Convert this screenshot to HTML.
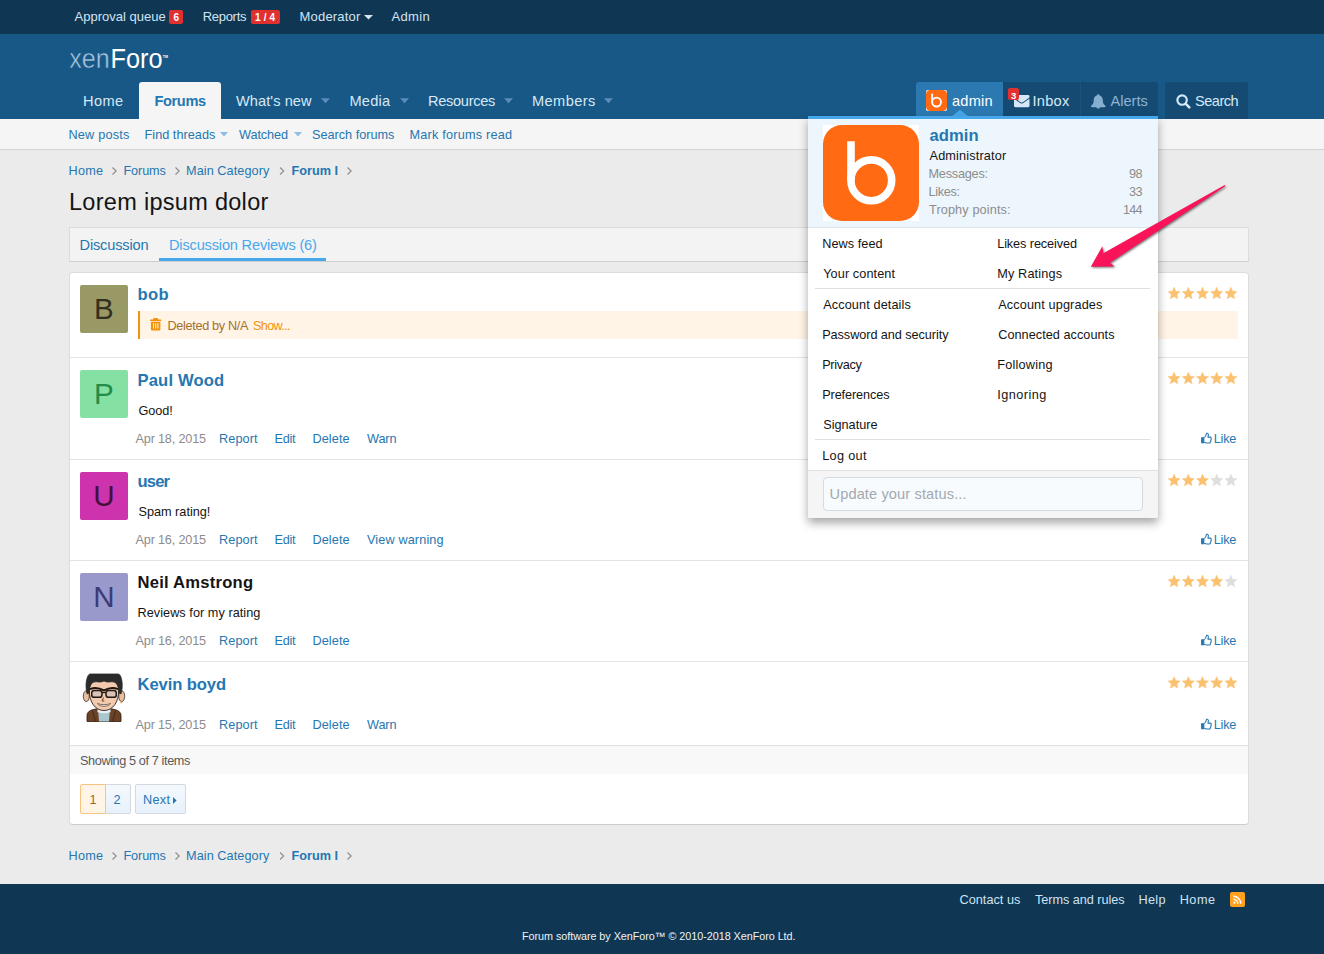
<!DOCTYPE html>
<html lang="en">
<head>
<meta charset="utf-8">
<title>Lorem ipsum dolor | XenForo</title>
<style>
*{box-sizing:border-box;margin:0;padding:0}
html,body{width:1324px;height:954px;overflow:hidden}
body{position:relative;background:#ebebeb;font-family:"Liberation Sans",sans-serif;font-size:15px;color:#141414}
a{text-decoration:none}
.abs,.t{position:absolute}
.t{white-space:nowrap;display:block;font-weight:400}
h1.t{font-weight:400}
#staffbar{left:0;top:0;width:1324px;height:34px;background:#0f3652}
#header{left:0;top:34px;width:1324px;height:85px;background:#185886}
#subnav{left:0;top:119px;width:1324px;height:31px;background:#f5f5f5;border-bottom:1px solid #d4d4d4}
.badge{background:#e03030;border-radius:2px}
#tabsel{left:139px;top:82px;width:82px;height:37px;background:#f5f5f5;border-radius:3px 3px 0 0}
.ng{top:82px;height:37px;background:#154b73}
#tabs{left:69px;top:227px;width:1180px;height:35px;background:#f3f3f3;border:1px solid #dcdcdc;border-bottom-color:#cfcfcf}
#tabline{left:159px;top:258px;width:167px;height:3px;background:#47a7eb}
#block{left:69px;top:272px;width:1180px;height:553px;background:#fff;border:1px solid #dcdcdc;border-bottom-color:#cdcdcd;border-radius:4px}
.rowline{left:70px;width:1178px;height:1px;background:#e4e4e4}
.av{left:80px;width:48px;height:48px;border-radius:2px}
#blockfoot{left:70px;top:746px;width:1178px;height:28px;background:#f8f8f8}
.pg{top:784px;height:30px;border:1px solid #d3d9de;background:linear-gradient(#f4f9fe,#e7f1fb)}
#footer{left:0;top:884px;width:1324px;height:70px;background:#0f3652}
#menu{left:808px;top:116px;width:350px;height:402px;background:#fff;border-top:3px solid #47a7eb;box-shadow:0 5px 10px 0 rgba(0,0,0,.35);border-radius:0 0 2px 2px}
#menuhead{left:808px;top:119px;width:350px;height:109px;background:#edf6fd;border-bottom:1px solid #dbe5ee}
.msep{left:815px;width:335px;height:1px;background:#dfdfdf}
#menufoot{left:808px;top:470px;width:350px;height:48px;background:#f5f5f5;border-top:1px solid #dfdfdf;border-radius:0 0 2px 2px}
#status{left:823px;top:477px;width:320px;height:34px;border:1px solid #d3dbe2;border-radius:4px;background:#f7fbfe}
#deleted{left:138px;top:311px;width:1100px;height:28px;background:#fff4e5;border-left:2px solid #f2930d}
svg{position:absolute;overflow:visible}
</style>
</head>
<body>

<!-- ============ staff bar ============ -->
<div id="staffbar" class="abs"></div>
<div class="abs badge" style="left:169px;top:10px;width:14px;height:14px"></div>
<div class="abs badge" style="left:251px;top:10px;width:29px;height:14px"></div>
<a href="#" class="t" style="left:74.50px;top:8px;font-size:13px;line-height:17px;letter-spacing:0.012px;color:#d2e4f4;">Approval queue</a>
<span class="t" style="left:173.60px;top:11px;font-size:10px;line-height:13px;letter-spacing:0.000px;color:#fff;font-weight:700;">6</span>
<a href="#" class="t" style="left:202.70px;top:8px;font-size:13px;line-height:17px;letter-spacing:-0.287px;color:#d2e4f4;">Reports</a>
<span class="t" style="left:255.00px;top:11px;font-size:10px;line-height:13px;letter-spacing:0.151px;color:#fff;font-weight:700;">1 / 4</span>
<a href="#" class="t" style="left:299.60px;top:8px;font-size:13px;line-height:17px;letter-spacing:0.185px;color:#d2e4f4;">Moderator</a>
<a href="#" class="t" style="left:391.50px;top:8px;font-size:13px;line-height:17px;letter-spacing:0.345px;color:#d2e4f4;">Admin</a>
<svg style="left:364px;top:15px" width="9" height="5" viewBox="0 0 9 5"><path d="M0 0h9L4.5 4.6z" fill="#d6e6f4"/></svg>

<!-- ============ header / nav ============ -->
<div id="header" class="abs"></div>
<svg id="logo" style="left:69px;top:40px" width="104" height="34" viewBox="0 0 104 34">
  <text x="0.3" y="27.7" font-family="Liberation Sans, sans-serif" font-size="28" fill="#a9c7e2" textLength="40.5" lengthAdjust="spacingAndGlyphs" stroke="#185886" stroke-width="0.5">xen</text>
  <text x="41.6" y="27.7" font-family="Liberation Sans, sans-serif" font-size="28" fill="#ffffff" textLength="52" lengthAdjust="spacingAndGlyphs">Foro</text>
  <text x="93.8" y="17.6" font-family="Liberation Sans, sans-serif" font-size="3.6" font-weight="700" fill="#ffffff">TM</text>
</svg>
<div id="tabsel" class="abs"></div>
<a href="#" class="t" style="left:83.00px;top:92px;font-size:14.6px;line-height:19px;letter-spacing:0.396px;color:#d6e8f7;">Home</a>
<a href="#" class="t" style="left:154.50px;top:92px;font-size:14.6px;line-height:19px;letter-spacing:-0.380px;color:#2577b1;font-weight:700;">Forums</a>
<a href="#" class="t" style="left:236.00px;top:92px;font-size:14.6px;line-height:19px;letter-spacing:0.063px;color:#d6e8f7;">What&#x27;s new</a>
<a href="#" class="t" style="left:349.50px;top:92px;font-size:14.6px;line-height:19px;letter-spacing:0.217px;color:#d6e8f7;">Media</a>
<a href="#" class="t" style="left:428.00px;top:92px;font-size:14.6px;line-height:19px;letter-spacing:-0.307px;color:#d6e8f7;">Resources</a>
<a href="#" class="t" style="left:532.00px;top:92px;font-size:14.6px;line-height:19px;letter-spacing:0.413px;color:#d6e8f7;">Members</a>
<svg style="left:321px;top:98px" width="9" height="6" viewBox="0 0 9 6"><path d="M0 .3h9L4.5 5.3z" fill="#5b8db9"/></svg>
<svg style="left:400px;top:98px" width="9" height="6" viewBox="0 0 9 6"><path d="M0 .3h9L4.5 5.3z" fill="#5b8db9"/></svg>
<svg style="left:504px;top:98px" width="9" height="6" viewBox="0 0 9 6"><path d="M0 .3h9L4.5 5.3z" fill="#5b8db9"/></svg>
<svg style="left:604px;top:98px" width="9" height="6" viewBox="0 0 9 6"><path d="M0 .3h9L4.5 5.3z" fill="#5b8db9"/></svg>

<!-- right nav group -->
<div class="abs ng" style="left:916px;width:87px;background:#2b79b0;border-radius:3px 0 0 0"></div>
<div class="abs ng" style="left:1003px;width:77px"></div>
<div class="abs ng" style="left:1080px;width:78px;border-radius:0 3px 0 0;border-left:1px solid #1a5380"></div>
<div class="abs ng" style="left:1165px;width:83px;border-radius:3px 3px 0 0"></div>
<!-- small avatar -->
<div class="abs" style="left:926px;top:90px;width:21px;height:21px;background:#fff;border-radius:2px"></div>
<svg style="left:926px;top:90px" width="21" height="21" viewBox="0 0 96 96"><rect width="96" height="96" rx="19" fill="#ff6a13"/><path d="M28 16.5V55" stroke="#fff" stroke-width="8.5" fill="none"/><circle cx="48.3" cy="55.3" r="20.3" stroke="#fff" stroke-width="8.5" fill="none"/></svg>
<!-- envelope -->
<svg style="left:1014px;top:95px" width="15.5" height="12.2" viewBox="0 0 16 12.5"><path d="M0 3.9l5.3 3.6c.7.5 1.6 1.3 2.7 1.3s2-.8 2.7-1.3L16 3.9v7.2c0 .8-.6 1.4-1.4 1.4H1.4C.6 12.500 0 11.900 0 11.100zM1.400 0h13.200c.8 0 1.400.7 1.400 1.400 0 .9-.7 1.700-1.400 2.200l-4.300 3c-.6.400-1.600 1.200-2.300 1.200s-1.700-.8-2.300-1.200l-4.300-3C.9 3.200 0 2.300 0 1.600 0 .700.500 0 1.400 0z" fill="#d6e8f7"/></svg>
<div class="abs badge" style="left:1008px;top:88px;width:11px;height:12px;background:#e03030;border-radius:2px"></div>
<!-- bell -->
<svg style="left:1091px;top:93.500px" width="14.5" height="14.5" viewBox="0 0 16 16"><path d="M8 0c.6 0 1 .4 1 1v.3c2.400.5 4 2.600 4 5.200 0 3.700 1.300 5.200 2.600 6.300.2.200.4.400.4.700 0 .6-.5 1-1 1H1c-.5 0-1-.4-1-1 0-.3.200-.5.400-.7C1.700 11.700 3 10.200 3 6.500c0-2.600 1.600-4.700 4-5.200V1c0-.6.400-1 1-1zM6 14.500h4c0 1-.9 1.500-2 1.500s-2-.5-2-1.500z" fill="#86aed0"/></svg>
<!-- search -->
<svg style="left:1176px;top:94px" width="14.500" height="14.500" viewBox="0 0 16 16"><circle cx="6.700" cy="6.700" r="5.200" stroke="#d6e8f7" stroke-width="2.400" fill="none"/><path d="M10.600 10.600L14.700 14.700" stroke="#d6e8f7" stroke-width="2.800" stroke-linecap="round"/></svg>
<a href="#" class="t" style="left:952.00px;top:92px;font-size:14.6px;line-height:19px;letter-spacing:0.217px;color:#fff;">admin</a>
<span class="t" style="left:1011.00px;top:90px;font-size:9.5px;line-height:12px;letter-spacing:0.000px;color:#fff;font-weight:700;">3</span>
<a href="#" class="t" style="left:1032.50px;top:92px;font-size:14.6px;line-height:19px;letter-spacing:0.274px;color:#d6e8f7;">Inbox</a>
<a href="#" class="t" style="left:1110.50px;top:92px;font-size:14.6px;line-height:19px;letter-spacing:-0.001px;color:#8fb4d3;">Alerts</a>
<a href="#" class="t" style="left:1195.00px;top:92px;font-size:14.6px;line-height:19px;letter-spacing:-0.525px;color:#d6e8f7;">Search</a>

<!-- ============ sub nav ============ -->
<div id="subnav" class="abs"></div>
<a href="#" class="t" style="left:68.50px;top:127px;font-size:12.7px;line-height:17px;letter-spacing:0.202px;color:#2577b1;">New posts</a>
<a href="#" class="t" style="left:144.50px;top:127px;font-size:12.7px;line-height:17px;letter-spacing:0.029px;color:#2577b1;">Find threads</a>
<a href="#" class="t" style="left:239.00px;top:127px;font-size:12.7px;line-height:17px;letter-spacing:-0.090px;color:#2577b1;">Watched</a>
<a href="#" class="t" style="left:312.00px;top:127px;font-size:12.7px;line-height:17px;letter-spacing:-0.013px;color:#2577b1;">Search forums</a>
<a href="#" class="t" style="left:409.50px;top:127px;font-size:12.7px;line-height:17px;letter-spacing:0.210px;color:#2577b1;">Mark forums read</a>
<svg style="left:220px;top:132px" width="8" height="5" viewBox="0 0 8 5"><path d="M0 0h8L4 4.600z" fill="#8fbde4"/></svg>
<svg style="left:294px;top:132px" width="8" height="5" viewBox="0 0 8 5"><path d="M0 0h8L4 4.600z" fill="#8fbde4"/></svg>

<!-- ============ breadcrumbs + title ============ -->
<a href="#" class="t" style="left:68.50px;top:163px;font-size:12.7px;line-height:17px;letter-spacing:0.238px;color:#2577b1;">Home</a>
<a href="#" class="t" style="left:123.50px;top:163px;font-size:12.7px;line-height:17px;letter-spacing:-0.131px;color:#2577b1;">Forums</a>
<a href="#" class="t" style="left:186.00px;top:163px;font-size:12.7px;line-height:17px;letter-spacing:0.070px;color:#2577b1;">Main Category</a>
<a href="#" class="t" style="left:291.50px;top:163px;font-size:12.7px;line-height:17px;letter-spacing:0.001px;color:#2577b1;font-weight:700;">Forum I</a>
<svg style="left:0;top:0" width="1324" height="954" viewBox="0 0 1324 954" fill="none" stroke="#8c8c8c" stroke-width="1.100">
  <g id="chev1"><path d="M112.500 167.500l3.700 3.500-3.700 3.500M175.500 167.500l3.700 3.500-3.700 3.500M280 167.500l3.700 3.500-3.700 3.500M347.500 167.500l3.700 3.500-3.700 3.500"/></g>
  <g transform="translate(0 685)"><path d="M112.500 167.500l3.700 3.500-3.700 3.500M175.500 167.500l3.700 3.500-3.700 3.500M280 167.500l3.700 3.500-3.700 3.500M347.500 167.500l3.700 3.500-3.700 3.500"/></g>
</svg>
<h1 class="t" style="left:69.00px;top:187px;font-size:23.5px;line-height:31px;letter-spacing:0.295px;color:#141414;">Lorem ipsum dolor</h1>

<!-- ============ tabs ============ -->
<div id="tabs" class="abs"></div>
<div id="tabline" class="abs"></div>
<a href="#" class="t" style="left:79.50px;top:236px;font-size:14.6px;line-height:19px;letter-spacing:-0.160px;color:#2577b1;">Discussion</a>
<a href="#" class="t" style="left:169.00px;top:236px;font-size:14.6px;line-height:19px;letter-spacing:-0.181px;color:#47a7eb;">Discussion Reviews (6)</a>

<!-- ============ review list ============ -->
<div id="block" class="abs"></div>
<div class="abs rowline" style="top:357px"></div>
<div class="abs rowline" style="top:459px"></div>
<div class="abs rowline" style="top:560px"></div>
<div class="abs rowline" style="top:661px"></div>
<div class="abs rowline" style="top:745px;background:#dfdfdf"></div>
<div id="blockfoot" class="abs"></div>

<div class="abs av" style="top:285px;background:#999966"></div>
<div class="abs av" style="top:370px;background:#85e0a3"></div>
<div class="abs av" style="top:472px;background:#cc33ad"></div>
<div class="abs av" style="top:573px;background:#9999cc"></div>
<span class="t" style="left:94.00px;top:290px;font-size:29.6px;line-height:38px;letter-spacing:0.000px;color:#33301f;">B</span>
<span class="t" style="left:94.00px;top:375px;font-size:29.6px;line-height:38px;letter-spacing:0.000px;color:#228c4b;">P</span>
<span class="t" style="left:93.30px;top:477px;font-size:29.6px;line-height:38px;letter-spacing:0.000px;color:#450f3b;">U</span>
<span class="t" style="left:93.30px;top:578px;font-size:29.6px;line-height:38px;letter-spacing:0.000px;color:#3b3b78;">N</span>
<!-- cartoon avatar -->
<svg style="left:80px;top:673px" width="48" height="48" viewBox="0 0 48 48">
  <rect width="48" height="48" fill="#fff"/>
  <path d="M7 48.500v-6c0-3.500 3-5.500 8.500-6.500h17c5.500 1 8.500 3 8.500 6.500v6z" fill="#6b4226" stroke="#2e1a0e" stroke-width=".8"/>
  <path d="M12.500 37.500l3 11M35.500 37.500l-3 11" stroke="#3a2314" stroke-width=".8" fill="none"/>
  <path d="M18 36h12l-1 12.500H19z" fill="#a9c6cf"/>
  <path d="M17.500 35h13v4c-3.500 2.200-9.500 2.200-13 0z" fill="#e9eef0" stroke="#9fb4bb" stroke-width=".4"/>
  <ellipse cx="6.300" cy="23.200" rx="3" ry="5.400" fill="#e8bfa0" stroke="#3a2a20" stroke-width=".8"/>
  <ellipse cx="41.700" cy="23.200" rx="3" ry="5.400" fill="#e8bfa0" stroke="#3a2a20" stroke-width=".8"/>
  <path d="M9.300 18c0-9 6-12.500 14.700-12.500S38.700 9 38.700 18c0 10.500-5.500 19.500-14.700 19.500S9.300 28.500 9.300 18z" fill="#f2cbae" stroke="#2b1d16" stroke-width=".9"/>
  <path d="M7.200 21c-1.800-6-1.500-14 1-18.500 1-1.500 2-1.700 3-1.500h26c1.500-.2 2.500.5 3 1.500 2.500 4.500 2.600 12.500.8 18.500l-2.200-1.500c.3-5-1.300-9.500-4.800-10.500-3.500-1-6 1.200-10 -1-4 2.200-6.500 0-10 1-3.500 1-5 5.500-4.700 10.500z" fill="#2b2b2b" stroke="#2b2b2b" stroke-width=".8" stroke-linejoin="round"/>
  <path d="M10 16.200c5-2.200 9-1.500 14 1.200 5-2.700 9-3.400 14-1.200" stroke="#1d1510" stroke-width="1.900" fill="none"/>
  <rect x="11.700" y="17.500" width="10.300" height="6.800" rx="2.600" fill="#d9c3b8" stroke="#241a14" stroke-width="1.500"/>
  <rect x="26" y="17.500" width="10.300" height="6.800" rx="2.600" fill="#d9c3b8" stroke="#241a14" stroke-width="1.500"/>
  <path d="M22 19.500h4" stroke="#241a14" stroke-width="1.300"/>
  <path d="M23.600 24.500l-1.500 3.300 2.200.4" stroke="#5a3d30" stroke-width="1" fill="none"/>
  <path d="M17.500 30.500c4.200 1.600 8.800 1.600 13 0-2 3.800-11 3.800-13 0z" fill="#f4f4f0" stroke="#6b4a3a" stroke-width=".8"/>
  <circle cx="41.300" cy="29.300" r="1.100" fill="#e8a33a"/>
</svg>

<div id="deleted" class="abs"></div>
<!-- trash -->
<svg style="left:149.500px;top:318px" width="11.300" height="12.600" viewBox="0 0 11.300 12.600" fill="#f2930d"><path d="M3.700 0h3.900l.7 1.500h2.600c.3 0 .4.200.4.400v.7c0 .3-.2.400-.4.400H.4C.2 3 0 2.900 0 2.600v-.7c0-.2.100-.4.400-.4H3zM.9 3.700h9.500v7.300c0 .9-.6 1.600-1.400 1.600H2.300c-.8 0-1.400-.7-1.400-1.600zM3 5.300v5.300h1V5.300zm2.200 0v5.300h1V5.300zm2.200 0v5.300h1V5.300z" fill-rule="evenodd"/></svg>

<a href="#" class="t" style="left:137.50px;top:284px;font-size:16.6px;line-height:22px;letter-spacing:0.364px;color:#2577b1;font-weight:700;">bob</a>
<span class="t" style="left:167.50px;top:318px;font-size:12.7px;line-height:17px;letter-spacing:-0.336px;color:#a5712d;">Deleted by N/A</span>
<a href="#" class="t" style="left:253.00px;top:318px;font-size:12.7px;line-height:17px;letter-spacing:-0.681px;color:#f2930d;">Show...</a>
<a href="#" class="t" style="left:137.50px;top:370px;font-size:16.6px;line-height:22px;letter-spacing:0.152px;color:#2577b1;font-weight:700;">Paul Wood</a>
<span class="t" style="left:138.50px;top:403px;font-size:12.7px;line-height:17px;letter-spacing:-0.059px;color:#141414;">Good!</span>
<span class="t" style="left:135.50px;top:431px;font-size:12.7px;line-height:17px;letter-spacing:-0.191px;color:#8c8c8c;">Apr 18, 2015</span>
<a href="#" class="t" style="left:219.00px;top:431px;font-size:12.7px;line-height:17px;letter-spacing:0.089px;color:#2577b1;">Report</a>
<a href="#" class="t" style="left:274.50px;top:431px;font-size:12.7px;line-height:17px;letter-spacing:-0.279px;color:#2577b1;">Edit</a>
<a href="#" class="t" style="left:312.50px;top:431px;font-size:12.7px;line-height:17px;letter-spacing:0.076px;color:#2577b1;">Delete</a>
<a href="#" class="t" style="left:367.00px;top:431px;font-size:12.7px;line-height:17px;letter-spacing:-0.095px;color:#2577b1;">Warn</a>
<a href="#" class="t" style="left:1213.70px;top:431px;font-size:12.7px;line-height:17px;letter-spacing:-0.206px;color:#2577b1;">Like</a>
<a href="#" class="t" style="left:137.50px;top:471px;font-size:16.6px;line-height:22px;letter-spacing:-0.864px;color:#2577b1;font-weight:700;">user</a>
<span class="t" style="left:138.50px;top:504px;font-size:12.7px;line-height:17px;letter-spacing:-0.010px;color:#141414;">Spam rating!</span>
<span class="t" style="left:135.50px;top:532px;font-size:12.7px;line-height:17px;letter-spacing:-0.191px;color:#8c8c8c;">Apr 16, 2015</span>
<a href="#" class="t" style="left:219.00px;top:532px;font-size:12.7px;line-height:17px;letter-spacing:0.089px;color:#2577b1;">Report</a>
<a href="#" class="t" style="left:274.50px;top:532px;font-size:12.7px;line-height:17px;letter-spacing:-0.279px;color:#2577b1;">Edit</a>
<a href="#" class="t" style="left:312.50px;top:532px;font-size:12.7px;line-height:17px;letter-spacing:0.076px;color:#2577b1;">Delete</a>
<a href="#" class="t" style="left:367.00px;top:532px;font-size:12.7px;line-height:17px;letter-spacing:0.121px;color:#2577b1;">View warning</a>
<a href="#" class="t" style="left:1213.70px;top:532px;font-size:12.7px;line-height:17px;letter-spacing:-0.206px;color:#2577b1;">Like</a>
<a href="#" class="t" style="left:137.50px;top:572px;font-size:16.6px;line-height:22px;letter-spacing:0.228px;color:#141414;font-weight:700;">Neil Amstrong</a>
<span class="t" style="left:137.50px;top:605px;font-size:12.7px;line-height:17px;letter-spacing:0.044px;color:#141414;">Reviews for my rating</span>
<span class="t" style="left:135.50px;top:633px;font-size:12.7px;line-height:17px;letter-spacing:-0.191px;color:#8c8c8c;">Apr 16, 2015</span>
<a href="#" class="t" style="left:219.00px;top:633px;font-size:12.7px;line-height:17px;letter-spacing:0.089px;color:#2577b1;">Report</a>
<a href="#" class="t" style="left:274.50px;top:633px;font-size:12.7px;line-height:17px;letter-spacing:-0.279px;color:#2577b1;">Edit</a>
<a href="#" class="t" style="left:312.50px;top:633px;font-size:12.7px;line-height:17px;letter-spacing:0.076px;color:#2577b1;">Delete</a>
<a href="#" class="t" style="left:1213.70px;top:633px;font-size:12.7px;line-height:17px;letter-spacing:-0.206px;color:#2577b1;">Like</a>
<a href="#" class="t" style="left:137.50px;top:674px;font-size:16.6px;line-height:22px;letter-spacing:-0.089px;color:#2577b1;font-weight:700;">Kevin boyd</a>
<span class="t" style="left:135.50px;top:717px;font-size:12.7px;line-height:17px;letter-spacing:-0.191px;color:#8c8c8c;">Apr 15, 2015</span>
<a href="#" class="t" style="left:219.00px;top:717px;font-size:12.7px;line-height:17px;letter-spacing:0.089px;color:#2577b1;">Report</a>
<a href="#" class="t" style="left:274.50px;top:717px;font-size:12.7px;line-height:17px;letter-spacing:-0.279px;color:#2577b1;">Edit</a>
<a href="#" class="t" style="left:312.50px;top:717px;font-size:12.7px;line-height:17px;letter-spacing:0.076px;color:#2577b1;">Delete</a>
<a href="#" class="t" style="left:367.00px;top:717px;font-size:12.7px;line-height:17px;letter-spacing:-0.095px;color:#2577b1;">Warn</a>
<a href="#" class="t" style="left:1213.70px;top:717px;font-size:12.7px;line-height:17px;letter-spacing:-0.206px;color:#2577b1;">Like</a>
<svg style="left:0;top:0" width="1324" height="954" viewBox="0 0 1324 954"><polygon points="1174.10,287.35 1175.78,291.29 1180.04,291.67 1176.81,294.48 1177.77,298.66 1174.10,296.45 1170.43,298.66 1171.39,294.48 1168.16,291.67 1172.42,291.29" fill="#fbc16f" stroke="#fbc16f" stroke-width="0.6" stroke-linejoin="round"/><polygon points="1188.30,287.35 1189.98,291.29 1194.24,291.67 1191.01,294.48 1191.97,298.66 1188.30,296.45 1184.63,298.66 1185.59,294.48 1182.36,291.67 1186.62,291.29" fill="#fbc16f" stroke="#fbc16f" stroke-width="0.6" stroke-linejoin="round"/><polygon points="1202.50,287.35 1204.18,291.29 1208.44,291.67 1205.21,294.48 1206.17,298.66 1202.50,296.45 1198.83,298.66 1199.79,294.48 1196.56,291.67 1200.82,291.29" fill="#fbc16f" stroke="#fbc16f" stroke-width="0.6" stroke-linejoin="round"/><polygon points="1216.70,287.35 1218.38,291.29 1222.64,291.67 1219.41,294.48 1220.37,298.66 1216.70,296.45 1213.03,298.66 1213.99,294.48 1210.76,291.67 1215.02,291.29" fill="#fbc16f" stroke="#fbc16f" stroke-width="0.6" stroke-linejoin="round"/><polygon points="1230.90,287.35 1232.58,291.29 1236.84,291.67 1233.61,294.48 1234.57,298.66 1230.90,296.45 1227.23,298.66 1228.19,294.48 1224.96,291.67 1229.22,291.29" fill="#fbc16f" stroke="#fbc16f" stroke-width="0.6" stroke-linejoin="round"/><polygon points="1174.10,372.35 1175.78,376.29 1180.04,376.67 1176.81,379.48 1177.77,383.66 1174.10,381.45 1170.43,383.66 1171.39,379.48 1168.16,376.67 1172.42,376.29" fill="#fbc16f" stroke="#fbc16f" stroke-width="0.6" stroke-linejoin="round"/><polygon points="1188.30,372.35 1189.98,376.29 1194.24,376.67 1191.01,379.48 1191.97,383.66 1188.30,381.45 1184.63,383.66 1185.59,379.48 1182.36,376.67 1186.62,376.29" fill="#fbc16f" stroke="#fbc16f" stroke-width="0.6" stroke-linejoin="round"/><polygon points="1202.50,372.35 1204.18,376.29 1208.44,376.67 1205.21,379.48 1206.17,383.66 1202.50,381.45 1198.83,383.66 1199.79,379.48 1196.56,376.67 1200.82,376.29" fill="#fbc16f" stroke="#fbc16f" stroke-width="0.6" stroke-linejoin="round"/><polygon points="1216.70,372.35 1218.38,376.29 1222.64,376.67 1219.41,379.48 1220.37,383.66 1216.70,381.45 1213.03,383.66 1213.99,379.48 1210.76,376.67 1215.02,376.29" fill="#fbc16f" stroke="#fbc16f" stroke-width="0.6" stroke-linejoin="round"/><polygon points="1230.90,372.35 1232.58,376.29 1236.84,376.67 1233.61,379.48 1234.57,383.66 1230.90,381.45 1227.23,383.66 1228.19,379.48 1224.96,376.67 1229.22,376.29" fill="#fbc16f" stroke="#fbc16f" stroke-width="0.6" stroke-linejoin="round"/><polygon points="1174.10,474.35 1175.78,478.29 1180.04,478.67 1176.81,481.48 1177.77,485.66 1174.10,483.45 1170.43,485.66 1171.39,481.48 1168.16,478.67 1172.42,478.29" fill="#fbc16f" stroke="#fbc16f" stroke-width="0.6" stroke-linejoin="round"/><polygon points="1188.30,474.35 1189.98,478.29 1194.24,478.67 1191.01,481.48 1191.97,485.66 1188.30,483.45 1184.63,485.66 1185.59,481.48 1182.36,478.67 1186.62,478.29" fill="#fbc16f" stroke="#fbc16f" stroke-width="0.6" stroke-linejoin="round"/><polygon points="1202.50,474.35 1204.18,478.29 1208.44,478.67 1205.21,481.48 1206.17,485.66 1202.50,483.45 1198.83,485.66 1199.79,481.48 1196.56,478.67 1200.82,478.29" fill="#fbc16f" stroke="#fbc16f" stroke-width="0.6" stroke-linejoin="round"/><polygon points="1216.70,474.35 1218.38,478.29 1222.64,478.67 1219.41,481.48 1220.37,485.66 1216.70,483.45 1213.03,485.66 1213.99,481.48 1210.76,478.67 1215.02,478.29" fill="#dedede" stroke="#dedede" stroke-width="0.6" stroke-linejoin="round"/><polygon points="1230.90,474.35 1232.58,478.29 1236.84,478.67 1233.61,481.48 1234.57,485.66 1230.90,483.45 1227.23,485.66 1228.19,481.48 1224.96,478.67 1229.22,478.29" fill="#dedede" stroke="#dedede" stroke-width="0.6" stroke-linejoin="round"/><polygon points="1174.10,575.35 1175.78,579.29 1180.04,579.67 1176.81,582.48 1177.77,586.66 1174.10,584.45 1170.43,586.66 1171.39,582.48 1168.16,579.67 1172.42,579.29" fill="#fbc16f" stroke="#fbc16f" stroke-width="0.6" stroke-linejoin="round"/><polygon points="1188.30,575.35 1189.98,579.29 1194.24,579.67 1191.01,582.48 1191.97,586.66 1188.30,584.45 1184.63,586.66 1185.59,582.48 1182.36,579.67 1186.62,579.29" fill="#fbc16f" stroke="#fbc16f" stroke-width="0.6" stroke-linejoin="round"/><polygon points="1202.50,575.35 1204.18,579.29 1208.44,579.67 1205.21,582.48 1206.17,586.66 1202.50,584.45 1198.83,586.66 1199.79,582.48 1196.56,579.67 1200.82,579.29" fill="#fbc16f" stroke="#fbc16f" stroke-width="0.6" stroke-linejoin="round"/><polygon points="1216.70,575.35 1218.38,579.29 1222.64,579.67 1219.41,582.48 1220.37,586.66 1216.70,584.45 1213.03,586.66 1213.99,582.48 1210.76,579.67 1215.02,579.29" fill="#fbc16f" stroke="#fbc16f" stroke-width="0.6" stroke-linejoin="round"/><polygon points="1230.90,575.35 1232.58,579.29 1236.84,579.67 1233.61,582.48 1234.57,586.66 1230.90,584.45 1227.23,586.66 1228.19,582.48 1224.96,579.67 1229.22,579.29" fill="#dedede" stroke="#dedede" stroke-width="0.6" stroke-linejoin="round"/><polygon points="1174.10,676.75 1175.78,680.69 1180.04,681.07 1176.81,683.88 1177.77,688.06 1174.10,685.85 1170.43,688.06 1171.39,683.88 1168.16,681.07 1172.42,680.69" fill="#fbc16f" stroke="#fbc16f" stroke-width="0.6" stroke-linejoin="round"/><polygon points="1188.30,676.75 1189.98,680.69 1194.24,681.07 1191.01,683.88 1191.97,688.06 1188.30,685.85 1184.63,688.06 1185.59,683.88 1182.36,681.07 1186.62,680.69" fill="#fbc16f" stroke="#fbc16f" stroke-width="0.6" stroke-linejoin="round"/><polygon points="1202.50,676.75 1204.18,680.69 1208.44,681.07 1205.21,683.88 1206.17,688.06 1202.50,685.85 1198.83,688.06 1199.79,683.88 1196.56,681.07 1200.82,680.69" fill="#fbc16f" stroke="#fbc16f" stroke-width="0.6" stroke-linejoin="round"/><polygon points="1216.70,676.75 1218.38,680.69 1222.64,681.07 1219.41,683.88 1220.37,688.06 1216.70,685.85 1213.03,688.06 1213.99,683.88 1210.76,681.07 1215.02,680.69" fill="#fbc16f" stroke="#fbc16f" stroke-width="0.6" stroke-linejoin="round"/><polygon points="1230.90,676.75 1232.58,680.69 1236.84,681.07 1233.61,683.88 1234.57,688.06 1230.90,685.85 1227.23,688.06 1228.19,683.88 1224.96,681.07 1229.22,680.69" fill="#fbc16f" stroke="#fbc16f" stroke-width="0.6" stroke-linejoin="round"/></svg>
<svg style="left:1200.600px;top:432.7px" width="11" height="11" viewBox="0 0 11 11"><path d="M3.200 4.600c1.400-1 2-2.300 2.200-4 .1-.7 1.900-.6 2 1 0 .9-.2 1.700-.5 2.500h2.400c.9 0 1.200 1.100.6 1.600.5.500.4 1.300-.2 1.600.3.500.1 1.200-.4 1.400.2.600-.2 1.300-1 1.300H5.500c-.9 0-1.500-.4-2.300-.7" fill="none" stroke="#2577b1" stroke-width="1.050" stroke-linejoin="round"/><path d="M.500 4.700h2.400v5.200H.500z" fill="#2577b1" stroke="#2577b1" stroke-width=".9" stroke-linejoin="round"/></svg><svg style="left:1200.600px;top:533.5px" width="11" height="11" viewBox="0 0 11 11"><path d="M3.200 4.600c1.400-1 2-2.300 2.200-4 .1-.7 1.900-.6 2 1 0 .9-.2 1.700-.5 2.500h2.400c.9 0 1.200 1.100.6 1.600.5.500.4 1.300-.2 1.600.3.500.1 1.200-.4 1.400.2.600-.2 1.300-1 1.300H5.500c-.9 0-1.500-.4-2.300-.7" fill="none" stroke="#2577b1" stroke-width="1.050" stroke-linejoin="round"/><path d="M.500 4.700h2.400v5.200H.500z" fill="#2577b1" stroke="#2577b1" stroke-width=".9" stroke-linejoin="round"/></svg><svg style="left:1200.600px;top:634.7px" width="11" height="11" viewBox="0 0 11 11"><path d="M3.200 4.600c1.400-1 2-2.300 2.200-4 .1-.7 1.900-.6 2 1 0 .9-.2 1.700-.5 2.500h2.400c.9 0 1.200 1.100.6 1.600.5.500.4 1.300-.2 1.600.3.500.1 1.200-.4 1.400.2.600-.2 1.300-1 1.300H5.500c-.9 0-1.500-.4-2.300-.7" fill="none" stroke="#2577b1" stroke-width="1.050" stroke-linejoin="round"/><path d="M.500 4.700h2.400v5.200H.500z" fill="#2577b1" stroke="#2577b1" stroke-width=".9" stroke-linejoin="round"/></svg><svg style="left:1200.600px;top:718.5px" width="11" height="11" viewBox="0 0 11 11"><path d="M3.200 4.600c1.400-1 2-2.300 2.200-4 .1-.7 1.900-.6 2 1 0 .9-.2 1.700-.5 2.500h2.400c.9 0 1.200 1.100.6 1.600.5.500.4 1.300-.2 1.600.3.500.1 1.200-.4 1.400.2.600-.2 1.300-1 1.300H5.500c-.9 0-1.500-.4-2.300-.7" fill="none" stroke="#2577b1" stroke-width="1.050" stroke-linejoin="round"/><path d="M.500 4.700h2.400v5.200H.500z" fill="#2577b1" stroke="#2577b1" stroke-width=".9" stroke-linejoin="round"/></svg>

<div class="abs pg" style="left:80px;width:26px;background:#fff4e5;border-color:#f8c580;border-radius:2px 0 0 2px"></div>
<div class="abs pg" style="left:105px;width:26px;border-radius:0 2px 2px 0;border-left-color:#f8c580"></div>
<div class="abs pg" style="left:135px;width:51px;border-radius:2px"></div>
<svg style="left:173px;top:797px" width="4" height="7" viewBox="0 0 4 7"><path d="M0 0l3.600 3.500L0 7z" fill="#2577b1"/></svg>
<span class="t" style="left:80.00px;top:753px;font-size:12.7px;line-height:17px;letter-spacing:-0.391px;color:#585858;">Showing 5 of 7 items</span>
<a href="#" class="t" style="left:89.50px;top:792px;font-size:12.7px;line-height:17px;letter-spacing:0.000px;color:#9c6a2a;">1</a>
<a href="#" class="t" style="left:113.50px;top:792px;font-size:12.7px;line-height:17px;letter-spacing:0.000px;color:#2577b1;">2</a>
<a href="#" class="t" style="left:143.00px;top:792px;font-size:12.7px;line-height:17px;letter-spacing:0.313px;color:#2577b1;">Next</a>

<!-- ============ footer ============ -->
<a href="#" class="t" style="left:68.50px;top:848px;font-size:12.7px;line-height:17px;letter-spacing:0.238px;color:#2577b1;">Home</a>
<a href="#" class="t" style="left:123.50px;top:848px;font-size:12.7px;line-height:17px;letter-spacing:-0.131px;color:#2577b1;">Forums</a>
<a href="#" class="t" style="left:186.00px;top:848px;font-size:12.7px;line-height:17px;letter-spacing:0.070px;color:#2577b1;">Main Category</a>
<a href="#" class="t" style="left:291.50px;top:848px;font-size:12.7px;line-height:17px;letter-spacing:0.001px;color:#2577b1;font-weight:700;">Forum I</a>
<div id="footer" class="abs"></div>
<a href="#" class="t" style="left:959.50px;top:892px;font-size:12.7px;line-height:17px;letter-spacing:0.022px;color:#cfe2f3;">Contact us</a>
<a href="#" class="t" style="left:1035.00px;top:892px;font-size:12.7px;line-height:17px;letter-spacing:-0.051px;color:#cfe2f3;">Terms and rules</a>
<a href="#" class="t" style="left:1138.50px;top:892px;font-size:12.7px;line-height:17px;letter-spacing:0.321px;color:#cfe2f3;">Help</a>
<a href="#" class="t" style="left:1179.70px;top:892px;font-size:12.7px;line-height:17px;letter-spacing:0.504px;color:#cfe2f3;">Home</a>
<span class="t" style="left:522.00px;top:929px;font-size:10.8px;line-height:14px;letter-spacing:-0.042px;color:#eef3f7;">Forum software by XenForo™ © 2010-2018 XenForo Ltd.</span>
<svg style="left:1230px;top:892px" width="15" height="15" viewBox="0 0 15 15"><rect width="15" height="15" rx="2" fill="#ffa11f"/><circle cx="4.400" cy="10.700" r="1.150" fill="#fff"/><path d="M3.300 7.300a4.500 4.500 0 0 1 4.500 4.500M3.300 4.300a7.500 7.500 0 0 1 7.500 7.500" stroke="#fff" stroke-width="1.500" fill="none"/></svg>

<!-- ============ account menu ============ -->
<svg style="left:952px;top:110px" width="16" height="6" viewBox="0 0 16 6"><path d="M0 6L8 0l8 6z" fill="#47a7eb"/></svg>
<div id="menu" class="abs"></div>
<div id="menuhead" class="abs"></div>
<div class="abs" style="left:823px;top:125px;width:96px;height:96px;background:#fff"></div>
<svg style="left:823px;top:125px" width="96" height="96" viewBox="0 0 96 96"><rect width="96" height="96" rx="19" fill="#ff6a13"/><path d="M28 16.300V55" stroke="#fff" stroke-width="7.600" fill="none"/><circle cx="48.300" cy="55.300" r="20.400" stroke="#fff" stroke-width="7.600" fill="none"/></svg>
<a href="#" class="t" style="left:929.50px;top:125px;font-size:16.6px;line-height:22px;letter-spacing:0.068px;color:#2577b1;font-weight:700;">admin</a>
<span class="t" style="left:929.50px;top:148px;font-size:12.7px;line-height:17px;letter-spacing:0.166px;color:#141414;">Administrator</span>
<span class="t" style="left:928.50px;top:166px;font-size:12.7px;line-height:17px;letter-spacing:-0.228px;color:#8c8c8c;">Messages:</span>
<span class="t" style="left:1129.00px;top:166px;font-size:12.7px;line-height:17px;letter-spacing:-0.556px;color:#8c8c8c;">98</span>
<span class="t" style="left:928.50px;top:184px;font-size:12.7px;line-height:17px;letter-spacing:-0.324px;color:#8c8c8c;">Likes:</span>
<span class="t" style="left:1129.00px;top:184px;font-size:12.7px;line-height:17px;letter-spacing:-0.556px;color:#8c8c8c;">33</span>
<span class="t" style="left:929.00px;top:202px;font-size:12.7px;line-height:17px;letter-spacing:0.123px;color:#8c8c8c;">Trophy points:</span>
<span class="t" style="left:1123.00px;top:202px;font-size:12.7px;line-height:17px;letter-spacing:-0.806px;color:#8c8c8c;">144</span>
<div class="abs msep" style="top:288px"></div>
<div class="abs msep" style="top:439px"></div>
<div id="menufoot" class="abs"></div>
<div id="status" class="abs"></div>
<a href="#" class="t" style="left:822.20px;top:236px;font-size:12.7px;line-height:17px;letter-spacing:0.052px;color:#141414;">News feed</a>
<a href="#" class="t" style="left:823.20px;top:266px;font-size:12.7px;line-height:17px;letter-spacing:0.095px;color:#141414;">Your content</a>
<a href="#" class="t" style="left:823.20px;top:297px;font-size:12.7px;line-height:17px;letter-spacing:0.114px;color:#141414;">Account details</a>
<a href="#" class="t" style="left:822.20px;top:327px;font-size:12.7px;line-height:17px;letter-spacing:-0.065px;color:#141414;">Password and security</a>
<a href="#" class="t" style="left:822.20px;top:357px;font-size:12.7px;line-height:17px;letter-spacing:-0.325px;color:#141414;">Privacy</a>
<a href="#" class="t" style="left:822.20px;top:387px;font-size:12.7px;line-height:17px;letter-spacing:-0.106px;color:#141414;">Preferences</a>
<a href="#" class="t" style="left:823.20px;top:417px;font-size:12.7px;line-height:17px;letter-spacing:0.006px;color:#141414;">Signature</a>
<a href="#" class="t" style="left:822.20px;top:448px;font-size:12.7px;line-height:17px;letter-spacing:0.332px;color:#141414;">Log out</a>
<a href="#" class="t" style="left:997.20px;top:236px;font-size:12.7px;line-height:17px;letter-spacing:-0.096px;color:#141414;">Likes received</a>
<a href="#" class="t" style="left:997.20px;top:266px;font-size:12.7px;line-height:17px;letter-spacing:0.154px;color:#141414;">My Ratings</a>
<a href="#" class="t" style="left:998.20px;top:297px;font-size:12.7px;line-height:17px;letter-spacing:0.125px;color:#141414;">Account upgrades</a>
<a href="#" class="t" style="left:998.20px;top:327px;font-size:12.7px;line-height:17px;letter-spacing:0.039px;color:#141414;">Connected accounts</a>
<a href="#" class="t" style="left:997.20px;top:357px;font-size:12.7px;line-height:17px;letter-spacing:0.220px;color:#141414;">Following</a>
<a href="#" class="t" style="left:997.20px;top:387px;font-size:12.7px;line-height:17px;letter-spacing:0.458px;color:#141414;">Ignoring</a>
<span class="t" style="left:829.50px;top:485px;font-size:14.6px;line-height:19px;letter-spacing:0.120px;color:#a3a9ae;">Update your status...</span>

<!-- annotation arrow -->
<svg style="left:0;top:0;filter:drop-shadow(1px 1.500px 1.200px rgba(0,0,0,.55))" width="1324" height="954" viewBox="0 0 1324 954"><path d="M1224.800 185 L1103.300 253.200 L1102.400 246.300 L1090.800 266.700 L1114.600 266.500 L1110 262.800 L1225.200 186.200 Z" fill="#f9145a"/></svg>

</body>
</html>
